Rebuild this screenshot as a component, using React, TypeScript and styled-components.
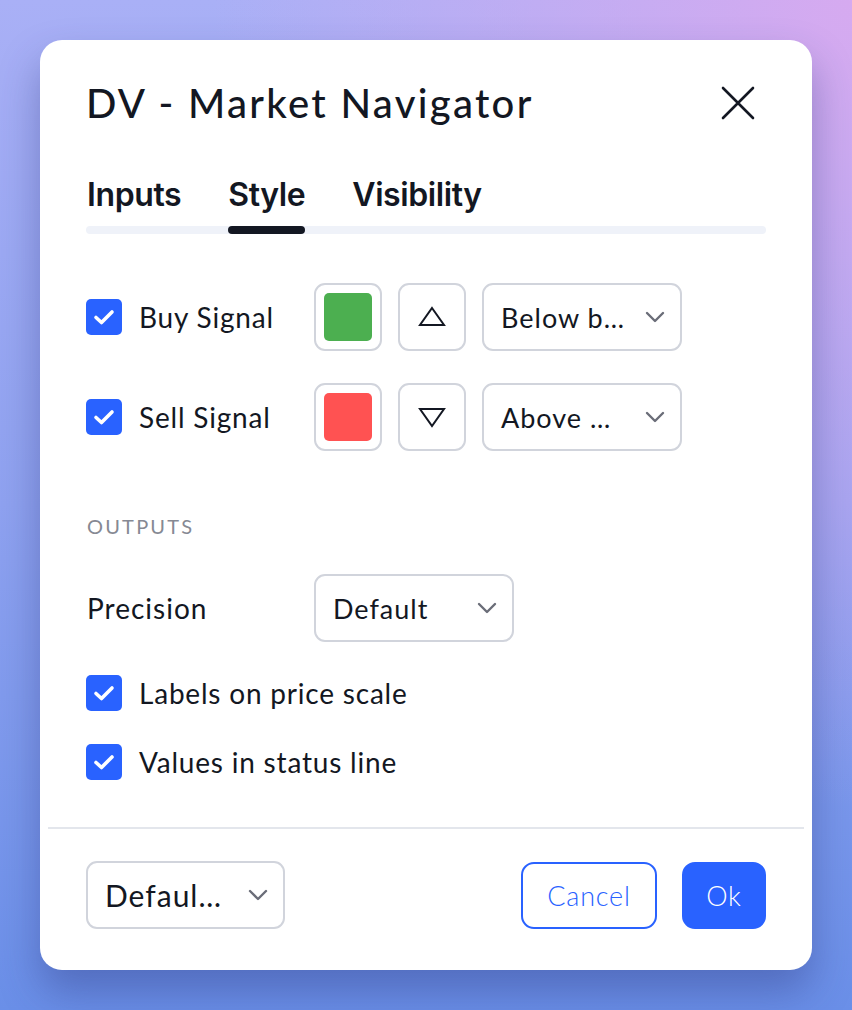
import React from "react";
import styled, { createGlobalStyle } from "styled-components";

const Global = createGlobalStyle`
  html, body { margin: 0; padding: 0; }
  body {
    font-family: "Lato", "Noto Sans", sans-serif;
    color: #131722;
  }
  #root { min-height: 1010px; }
`;

const Page = styled.div`
  width: 852px;
  height: 1010px;
  box-sizing: border-box;
  padding: 40px;
  background:
    radial-gradient(ellipse 75% 80% at 100% 0%, rgba(214, 170, 240, 1) 0%, rgba(214, 170, 240, 0) 100%),
    linear-gradient(to bottom, #a9b0f6 0%, #8fa2f0 50%, #6a8fe8 100%);
  overflow: hidden;
`;

const Card = styled.div`
  width: 772px;
  height: 930px;
  background: #fff;
  border-radius: 22px;
  box-shadow: 0 22px 40px rgba(40, 50, 120, 0.38);
  display: flex;
  flex-direction: column;
`;

const Body = styled.div`
  padding: 39px 46px 0;
  display: flex;
  flex-direction: column;
`;

const Header = styled.div`
  display: flex;
  align-items: center;
  justify-content: space-between;
  height: 48px;
`;

const Title = styled.h1`
  margin: 0;
  font-size: 40px;
  font-weight: 500;
  letter-spacing: 2.3px;
  line-height: 48px;
  color: #131722;
`;

const CloseButton = styled.button`
  width: 36px;
  height: 36px;
  border: none;
  background: none;
  padding: 0;
  margin-right: 10px;
  display: flex;
  align-items: center;
  justify-content: center;
`;

const Tabs = styled.div`
  margin-top: 48px;
  display: flex;
  flex-direction: column;
`;

const TabRow = styled.div`
  display: flex;
  gap: 47px;
  padding-left: 1px;
`;

const Tab = styled.div<{ $active?: boolean }>`
  font-family: "Inter", sans-serif;
  font-size: 32px;
  font-weight: 600;
  line-height: 40px;
  letter-spacing: -0.4px;
  color: #131722;
  position: relative;
  &::after {
    content: "";
    position: absolute;
    left: 0;
    right: 0;
    bottom: -19px;
    height: 8px;
    border-radius: 4px;
    background: ${(p) => (p.$active ? "#131722" : "transparent")};
    z-index: 1;
  }
`;

const Track = styled.div`
  margin-top: 11px;
  height: 8px;
  border-radius: 4px;
  background: #eff2f9;
`;

const SignalList = styled.div`
  margin-top: 49px;
  display: flex;
  flex-direction: column;
  gap: 32px;
`;

const SignalRow = styled.div`
  display: grid;
  grid-template-columns: 212px 68px 68px 200px;
  column-gap: 16px;
  align-items: center;
  height: 68px;
`;

const CheckLabel = styled.label`
  display: flex;
  align-items: center;
  gap: 17px;
  font-size: 28px;
  letter-spacing: 0.8px;
  color: #131722;
`;

const Box = styled.span`
  width: 36px;
  height: 36px;
  border-radius: 5px;
  background: #2962ff;
  display: flex;
  align-items: center;
  justify-content: center;
  flex: none;
`;

const Field = styled.div`
  box-sizing: border-box;
  height: 68px;
  border: 2px solid #d1d4dc;
  border-radius: 11px;
  background: #fff;
  display: flex;
  align-items: center;
  justify-content: center;
`;

const Swatch = styled.span<{ $color: string }>`
  width: 48px;
  height: 48px;
  border-radius: 5px;
  background: ${(p) => p.$color};
`;

const Select = styled(Field)<{ $width?: number; $size?: number }>`
  width: ${(p) => (p.$width ? `${p.$width}px` : "auto")};
  justify-content: space-between;
  padding: 0 15px 0 17px;
  font-size: ${(p) => p.$size ?? 27}px;
  letter-spacing: 1px;
  color: #131722;
`;

const SectionTitle = styled.div`
  margin-top: 63px;
  font-size: 20px;
  font-weight: 400;
  line-height: 24px;
  letter-spacing: 2.2px;
  color: #868993;
  padding-left: 1px;
`;

const OptionRow = styled.div`
  margin-top: 36px;
  display: grid;
  grid-template-columns: 228px 200px;
  align-items: center;
`;

const OptionLabel = styled.span`
  font-size: 28px;
  letter-spacing: 1px;
  padding-left: 1px;
`;

const CheckList = styled.div`
  margin-top: 33px;
  display: flex;
  flex-direction: column;
  gap: 33px;
`;

const Footer = styled.div`
  margin: auto 8px 0;
  border-top: 2px solid #e3e6ec;
  padding: 32px 38px 41px;
  display: flex;
  align-items: center;
  justify-content: space-between;
`;

const Actions = styled.div`
  display: flex;
  gap: 25px;
`;

const Button = styled.button<{ $primary?: boolean }>`
  box-sizing: border-box;
  height: 67px;
  width: ${(p) => (p.$primary ? 84 : 136)}px;
  padding: 0;
  border-radius: 13px;
  border: 2px solid #2962ff;
  background: ${(p) => (p.$primary ? "#2962ff" : "#fff")};
  color: ${(p) => (p.$primary ? "#fff" : "#2962ff")};
  font-family: "Lato", sans-serif;
  font-size: 27px;
  font-weight: 300;
  letter-spacing: 0.8px;
`;

const Check = () => (
  <Box>
    <svg width="22" height="18" viewBox="0 0 22 18">
      <path d="M3 9.5 L8.5 14.5 L19 4" fill="none" stroke="#fff" strokeWidth="3.6" strokeLinecap="round" strokeLinejoin="round" />
    </svg>
  </Box>
);

const Chevron = () => (
  <svg width="20" height="12" viewBox="0 0 20 12">
    <polyline points="2,2 10,10 18,2" fill="none" stroke="#6a6d78" strokeWidth="2.4" strokeLinecap="round" strokeLinejoin="round" />
  </svg>
);

const Triangle = ({ down }: { down?: boolean }) => (
  <svg width="28" height="22" viewBox="0 0 28 22">
    <polygon
      points={down ? "2,3 26,3 14,20" : "14,2 26,19 2,19"}
      fill="none"
      stroke="#131722"
      strokeWidth="2"
      strokeLinejoin="miter"
    />
  </svg>
);

const signals = [
  { label: "Buy Signal", color: "#4caf50", down: false, place: "Below b…" },
  { label: "Sell Signal", color: "#ff5252", down: true, place: "Above …" },
];

export default function App() {
  return (
    <>
      <Global />
      <Page>
        <Card>
          <Body>
            <Header>
              <Title>DV - Market Navigator</Title>
              <CloseButton aria-label="Close">
                <svg width="34" height="34" viewBox="0 0 34 34">
                  <path d="M2 2 L32 32 M32 2 L2 32" stroke="#131722" strokeWidth="2.6" strokeLinecap="round" />
                </svg>
              </CloseButton>
            </Header>
            <Tabs>
              <TabRow>
                <Tab>Inputs</Tab>
                <Tab $active>Style</Tab>
                <Tab>Visibility</Tab>
              </TabRow>
              <Track />
            </Tabs>
            <SignalList>
              {signals.map((s) => (
                <SignalRow key={s.label}>
                  <CheckLabel>
                    <Check />
                    {s.label}
                  </CheckLabel>
                  <Field>
                    <Swatch $color={s.color} />
                  </Field>
                  <Field>
                    <Triangle down={s.down} />
                  </Field>
                  <Select>
                    <span>{s.place}</span>
                    <Chevron />
                  </Select>
                </SignalRow>
              ))}
            </SignalList>
            <SectionTitle>OUTPUTS</SectionTitle>
            <OptionRow>
              <OptionLabel>Precision</OptionLabel>
              <Select $width={200}>
                <span>Default</span>
                <Chevron />
              </Select>
            </OptionRow>
            <CheckList>
              <CheckLabel>
                <Check />
                Labels on price scale
              </CheckLabel>
              <CheckLabel>
                <Check />
                Values in status line
              </CheckLabel>
            </CheckList>
          </Body>
          <Footer>
            <Select $width={199} $size={30}>
              <span>Defaul…</span>
              <Chevron />
            </Select>
            <Actions>
              <Button>Cancel</Button>
              <Button $primary>Ok</Button>
            </Actions>
          </Footer>
        </Card>
      </Page>
    </>
  );
}
